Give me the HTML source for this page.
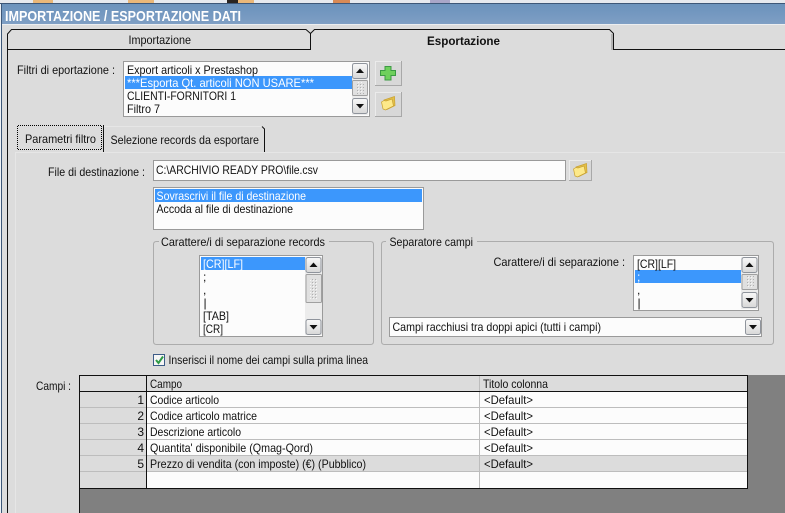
<!DOCTYPE html>
<html><head><meta charset="utf-8"><style>
html,body{margin:0;padding:0;background:#dcdcdc;overflow:hidden;width:785px;height:513px}
svg{display:block;position:absolute;left:0;top:0}
text{font-family:"Liberation Sans",sans-serif;font-size:12px;fill:#111}
.w{fill:#fff}
.gb{position:absolute;background:#808080;z-index:5}
</style></head><body>
<svg width="785" height="513" viewBox="0 0 785 513" xmlns="http://www.w3.org/2000/svg">
<defs>
<linearGradient id="tb" x1="0" y1="0" x2="0" y2="1"><stop offset="0" stop-color="#6c93bc"/><stop offset=".5" stop-color="#7498c0"/><stop offset="1" stop-color="#7f9fc4"/></linearGradient>
<linearGradient id="sb" x1="0" y1="0" x2="0" y2="1"><stop offset="0" stop-color="#f8f8f8"/><stop offset="1" stop-color="#d8d8d8"/></linearGradient>
<pattern id="dots" width="3" height="3" patternUnits="userSpaceOnUse"><rect width="1" height="1" fill="#b0b0b0"/><rect x="1" y="1" width="1" height="1" fill="#f6f6f6"/></pattern>
<g id="up"><rect x=".5" y=".5" width="15" height="15" rx="2" fill="url(#sb)" stroke="#8f949c"/><path d="M4 10 L8 5.500 L12 10Z" fill="#111"/></g>
<g id="dn"><rect x=".5" y=".5" width="15" height="15" rx="2" fill="url(#sb)" stroke="#8f949c"/><path d="M4 6 L8 10.500 L12 6Z" fill="#111"/></g>
<g id="folder"><path d="M3 4 L13.500 .5 L14 9.500 L6 13.500Z" fill="#e3c04a" stroke="#c9a233" stroke-width=".7"/><path d="M.5 6 L3 4.500 L5 5 L11 3 L12.500 10 L4.500 14 L2 13Z" fill="#fde98a" stroke="#c9a233" stroke-width=".7"/></g>
<g id="btn"><rect width="27" height="25" fill="#d8d8d8"/><path d="M.5 25V.5H27" fill="none" stroke="#ebebeb"/><path d="M26.500 0V24.500H0" fill="none" stroke="#a8a8a8"/></g>
</defs>

<!-- top strip -->
<rect width="785" height="4" fill="#e6e9ee"/>
<rect x="33" y="0" width="20" height="3" fill="#eab778"/>
<rect x="128" y="0" width="26" height="3" fill="#eab778"/>
<rect x="227" y="0" width="11" height="3" fill="#2a2420"/>
<rect x="238" y="0" width="16" height="3" fill="#eab778"/>
<rect x="333" y="0" width="17" height="3" fill="#d98a55"/>
<rect x="430" y="0" width="20" height="3" fill="#a9a6c8"/>
<rect y="3" width="785" height="1" fill="#3d5778"/>
<!-- left edge -->
<rect x="0" y="4" width="1" height="509" fill="#eef2f6"/>
<rect x="1" y="4" width="1" height="509" fill="#3d5778"/>
<!-- title -->
<rect x="2" y="4" width="783" height="20" fill="url(#tb)"/>
<rect x="2" y="24" width="783" height="1" fill="#eceef0"/>
<text x="5" y="21" textLength="236" lengthAdjust="spacingAndGlyphs" class="w" style="font-size:15px;font-weight:bold">IMPORTAZIONE / ESPORTAZIONE DATI</text>

<!-- main tabs -->
<path d="M7.500 513V34L11.500 29.500H306L310.500 33.500V49.500H7.500" fill="#dcdcdc" stroke="#111"/>
<path d="M310.500 33.500L314.500 29.500H609.500L613.500 33.500V49.500H785" fill="none" stroke="#111"/>
<rect x="611" y="34" width="2" height="16" fill="#b4b4b4"/>
<text x="128.500" y="44" textLength="62.500" lengthAdjust="spacingAndGlyphs">Importazione</text>
<text x="427" y="45" textLength="73" lengthAdjust="spacingAndGlyphs" style="font-weight:bold">Esportazione</text>

<!-- filters -->
<text x="17" y="74" textLength="98" lengthAdjust="spacingAndGlyphs">Filtri di eportazione :</text>
<rect x="123.500" y="61.500" width="246" height="55" fill="#fcfcfc" stroke="#9a9a9a"/>
<rect x="125" y="76" width="227" height="13" fill="#3c97fc"/>
<text x="127" y="74" textLength="131" lengthAdjust="spacingAndGlyphs">Export articoli x Prestashop</text>
<text x="127" y="87" textLength="187" lengthAdjust="spacingAndGlyphs" class="w">***Esporta Qt. articoli NON USARE***</text>
<text x="127" y="100" textLength="109" lengthAdjust="spacingAndGlyphs">CLIENTI-FORNITORI 1</text>
<text x="127" y="113" textLength="33" lengthAdjust="spacingAndGlyphs">Filtro 7</text>
<rect x="352" y="63" width="16" height="52" fill="#ececec"/>
<use href="#up" x="352" y="63"/>
<rect x="352.500" y="80.500" width="15" height="15" rx="1" fill="#e0e0e0" stroke="#a0a0a0"/>
<rect x="356" y="82" width="8" height="12" fill="url(#dots)"/>
<use href="#dn" x="352" y="98"/>
<use href="#btn" x="375" y="61"/>
<path d="M385 66.500h6v4h4.500v5h-4.500v4.500h-6v-4.500h-4.500v-5h4.500z" fill="#6ed05c" stroke="#3c9a44"/>
<use href="#btn" x="375" y="92"/>
<use href="#folder" x="381" y="96"/>

<!-- sub tabs -->
<rect x="16" y="152" width="769" height="1" fill="#e6e6e6"/>
<rect x="15" y="152" width="1" height="361" fill="#e6e6e6"/>
<path d="M18 125.500H102M18 149.500H102M17.500 126V150M101.500 126V150" fill="none" stroke="#000" stroke-dasharray="1 1" shape-rendering="crispEdges"/>
<path d="M103.500 125V152" stroke="#111" fill="none"/>
<path d="M104 126.500H262" stroke="#e6e6e6" fill="none"/>
<path d="M262 126.500L264.500 129V152" stroke="#111" fill="none"/>
<text x="25" y="143" textLength="71" lengthAdjust="spacingAndGlyphs">Parametri filtro</text>
<text x="110.500" y="144" textLength="148.500" lengthAdjust="spacingAndGlyphs">Selezione records da esportare</text>

<!-- file -->
<text x="48" y="176" textLength="97" lengthAdjust="spacingAndGlyphs">File di destinazione :</text>
<rect x="153.500" y="160.500" width="412" height="20" fill="#fcfcfc" stroke="#9a9a9a"/>
<text x="156" y="174" textLength="162" lengthAdjust="spacingAndGlyphs">C:\ARCHIVIO READY PRO\file.csv</text>
<rect x="569" y="160" width="23" height="21" fill="#d8d8d8"/>
<path d="M569.500 181V160.500H592" fill="none" stroke="#ebebeb"/>
<path d="M591.500 160V180.500H569" fill="none" stroke="#a8a8a8"/>
<use href="#folder" x="573" y="163"/>

<rect x="153.500" y="187.500" width="270" height="42" fill="#fcfcfc" stroke="#9a9a9a"/>
<rect x="155" y="189" width="267" height="13" fill="#3c97fc"/>
<text x="156.500" y="200" textLength="149.500" lengthAdjust="spacingAndGlyphs" class="w">Sovrascrivi il file di destinazione</text>
<text x="156.500" y="213" textLength="136.500" lengthAdjust="spacingAndGlyphs">Accoda al file di destinazione</text>

<!-- group 1 -->
<path d="M159 241.500H156.500Q153.500 241.500 153.500 244.500V341.500Q153.500 344.500 156.500 344.500H370.500Q373.500 344.500 373.500 341.500V244.500Q373.500 241.500 370.500 241.500H329" fill="none" stroke="#acacac"/>
<text x="161" y="246" textLength="164" lengthAdjust="spacingAndGlyphs">Carattere/i di separazione records</text>
<rect x="199.500" y="255.500" width="123" height="81" fill="#fcfcfc" stroke="#9a9a9a"/>
<rect x="201" y="257" width="104" height="13" fill="#3c97fc"/>
<text x="203" y="268" textLength="40" lengthAdjust="spacingAndGlyphs" class="w">[CR][LF]</text>
<text x="203" y="281">;</text>
<text x="203" y="294">,</text>
<text x="203.500" y="307">|</text>
<text x="203" y="320" textLength="26" lengthAdjust="spacingAndGlyphs">[TAB]</text>
<text x="203" y="333" textLength="20" lengthAdjust="spacingAndGlyphs">[CR]</text>
<rect x="305" y="257" width="17" height="78" fill="#ececec"/>
<use href="#up" x="305.500" y="257"/>
<rect x="306" y="274.500" width="15.500" height="28" rx="1" fill="#e0e0e0" stroke="#a0a0a0"/>
<rect x="310" y="278" width="8" height="21" fill="url(#dots)"/>
<use href="#dn" x="305.500" y="319"/>

<!-- group 2 -->
<path d="M386 241.500H384.500Q381.500 241.500 381.500 244.500V341.500Q381.500 344.500 384.500 344.500H770.500Q773.500 344.500 773.500 341.500V244.500Q773.500 241.500 770.500 241.500H477" fill="none" stroke="#acacac"/>
<text x="389.500" y="246" textLength="83.500" lengthAdjust="spacingAndGlyphs">Separatore campi</text>
<text x="493.500" y="266" textLength="131.500" lengthAdjust="spacingAndGlyphs">Carattere/i di separazione :</text>
<rect x="633.500" y="255.500" width="125" height="55" fill="#fcfcfc" stroke="#9a9a9a"/>
<rect x="635" y="270" width="106" height="13" fill="#3c97fc"/>
<text x="637" y="268" textLength="39" lengthAdjust="spacingAndGlyphs">[CR][LF]</text>
<text x="637" y="281" class="w">;</text>
<text x="637" y="294">,</text>
<text x="637.500" y="307">|</text>
<rect x="741" y="257" width="17" height="52" fill="#ececec"/>
<use href="#up" x="741.500" y="257"/>
<rect x="742" y="274.500" width="15.500" height="15" rx="1" fill="#e0e0e0" stroke="#a0a0a0"/>
<rect x="746" y="276" width="8" height="12" fill="url(#dots)"/>
<use href="#dn" x="741.500" y="292"/>
<rect x="389.500" y="317.500" width="372" height="19" fill="#fcfcfc" stroke="#9a9a9a"/>
<text x="392.500" y="331" textLength="208.500" lengthAdjust="spacingAndGlyphs">Campi racchiusi tra doppi apici (tutti i campi)</text>
<use href="#dn" x="745" y="319"/>

<!-- checkbox -->
<rect x="153.500" y="354.500" width="11" height="11" fill="#f6f6f6" stroke="#3d5c88"/>
<path d="M156 360L158.500 363L163 356.500" fill="none" stroke="#2e9a46" stroke-width="2"/>
<text x="168.500" y="364" textLength="199.500" lengthAdjust="spacingAndGlyphs">Inserisci il nome dei campi sulla prima linea</text>

<!-- grid -->
<text x="36" y="390" textLength="35" lengthAdjust="spacingAndGlyphs">Campi :</text>
<rect x="80" y="376" width="667" height="112" fill="#fcfcfc"/>
<rect x="80" y="376" width="667" height="15" fill="#dcdcdc"/>
<rect x="80" y="392" width="66" height="96" fill="#dcdcdc"/>
<rect x="147" y="456" width="600" height="15" fill="#dcdcdc"/>
<g fill="#bdbdbd">
<rect x="80" y="407" width="667" height="1"/>
<rect x="80" y="423" width="667" height="1"/>
<rect x="80" y="439" width="667" height="1"/>
<rect x="80" y="455" width="667" height="1"/>
<rect x="80" y="471" width="667" height="1"/>
<rect x="479" y="376" width="1" height="112"/>
</g>
<path d="M79.500 513V375.500H747.500V488.500H80M79 391.500H747M146.500 376V488" fill="none" stroke="#111"/>
<text x="150" y="388" textLength="32" lengthAdjust="spacingAndGlyphs">Campo</text>
<text x="483" y="388" textLength="65" lengthAdjust="spacingAndGlyphs">Titolo colonna</text>
<g text-anchor="end">
<text x="144" y="404">1</text><text x="144" y="420">2</text><text x="144" y="436">3</text><text x="144" y="452">4</text><text x="144" y="468">5</text>
</g>
<text x="150" y="404" textLength="69" lengthAdjust="spacingAndGlyphs">Codice articolo</text>
<text x="150" y="420" textLength="107" lengthAdjust="spacingAndGlyphs">Codice articolo matrice</text>
<text x="150" y="436" textLength="91" lengthAdjust="spacingAndGlyphs">Descrizione articolo</text>
<text x="150" y="452" textLength="163" lengthAdjust="spacingAndGlyphs">Quantita' disponibile (Qmag-Qord)</text>
<text x="150" y="468" textLength="216" lengthAdjust="spacingAndGlyphs">Prezzo di vendita (con imposte) (€) (Pubblico)</text>
<text x="484" y="404" textLength="49" lengthAdjust="spacingAndGlyphs">&lt;Default&gt;</text>
<text x="484" y="420" textLength="49" lengthAdjust="spacingAndGlyphs">&lt;Default&gt;</text>
<text x="484" y="436" textLength="49" lengthAdjust="spacingAndGlyphs">&lt;Default&gt;</text>
<text x="484" y="452" textLength="49" lengthAdjust="spacingAndGlyphs">&lt;Default&gt;</text>
<text x="484" y="468" textLength="49" lengthAdjust="spacingAndGlyphs">&lt;Default&gt;</text>
</svg>
<div class="gb" style="left:80px;top:489px;width:705px;height:24px"></div>
<div class="gb" style="left:748px;top:375px;width:37px;height:114px"></div>
</body></html>
